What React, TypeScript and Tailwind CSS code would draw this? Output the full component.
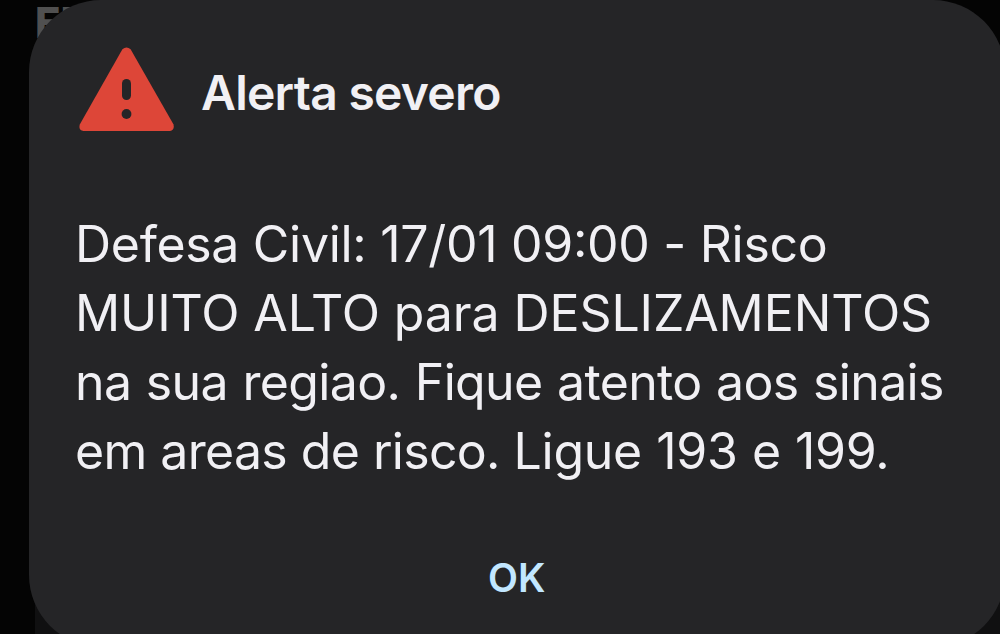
import { ReactNode } from "react";

const messageLines: { id: number; text: ReactNode; style: string }[] = [
	{
		id: 1,
		text: (
			<>
				Defesa Civil: 17/01 09<span className="relative -top-[5px]">:</span>00 - Risco
			</>
		),
		style: "tracking-[-0.3px]",
	},
	{ id: 2, text: "MUITO ALTO para DESLIZAMENTOS", style: "tracking-[-0.1px]" },
	{
		id: 3,
		text: "na sua regiao. Fique atento aos sinais",
		style: "tracking-[-0.65px] [word-spacing:1.1px]",
	},
	{
		id: 4,
		text: (
			<>
				<span className="tracking-[-0.7px]">em areas de risco. </span>
				Ligue 193 e 199.
			</>
		),
		style: "tracking-[-0.25px] [word-spacing:0.4px]",
	},
];

function WarningIcon() {
	return (
		<svg width="96" height="84" viewBox="0 0 96 84" className="shrink-0">
			<path
				d="M43.4 2.2Q47.500 -1.200 51.600 2.200L94.400 77.200Q96 83.300 91 84H4.500Q-1 83.300 0.900 77.200Z"
				fill="#dd4638"
			/>
			<rect x="43" y="32" width="9" height="21" rx="4.500" fill="#252527" />
			<circle cx="47.500" cy="67" r="4.900" fill="#252527" />
		</svg>
	);
}

export default function App() {
	return (
		<main className="relative h-[634px] w-[1000px] overflow-hidden bg-[#040404] font-['Inter',sans-serif]">
			{/* page left visible behind the dialog */}
			<span className="absolute left-[35px] top-0 text-[42px] leading-[46px] font-extrabold text-[#505050]">
				EM
			</span>
			<div className="absolute left-[35px] bottom-0 h-16 w-[965px] bg-[#101011]" />

			<section className="relative ml-[29px] flex h-[647px] w-[976px] flex-col rounded-[72px] bg-[#252527] text-[#f1f0f4]">
				<header className="flex items-start gap-[26px] pl-[50px] pt-[47px]">
					<WarningIcon />
					<h1 className="mt-[16px] text-[48px] leading-[60px] font-semibold whitespace-nowrap tracking-[-0.75px]">
						Alerta severo
					</h1>
				</header>

				<div className="mt-[79px] flex flex-col items-start pl-[46px] text-[50px] leading-[69px] font-[440]">
					{messageLines.map((line) => (
						<p key={line.id} className={`whitespace-nowrap ${line.style}`}>
							{line.text}
						</p>
					))}
				</div>

				<button className="mt-[67px] ml-[459px] self-start text-[39px] leading-[50px] font-semibold text-[#c2e7ff]">
					OK
				</button>
			</section>
		</main>
	);
}
